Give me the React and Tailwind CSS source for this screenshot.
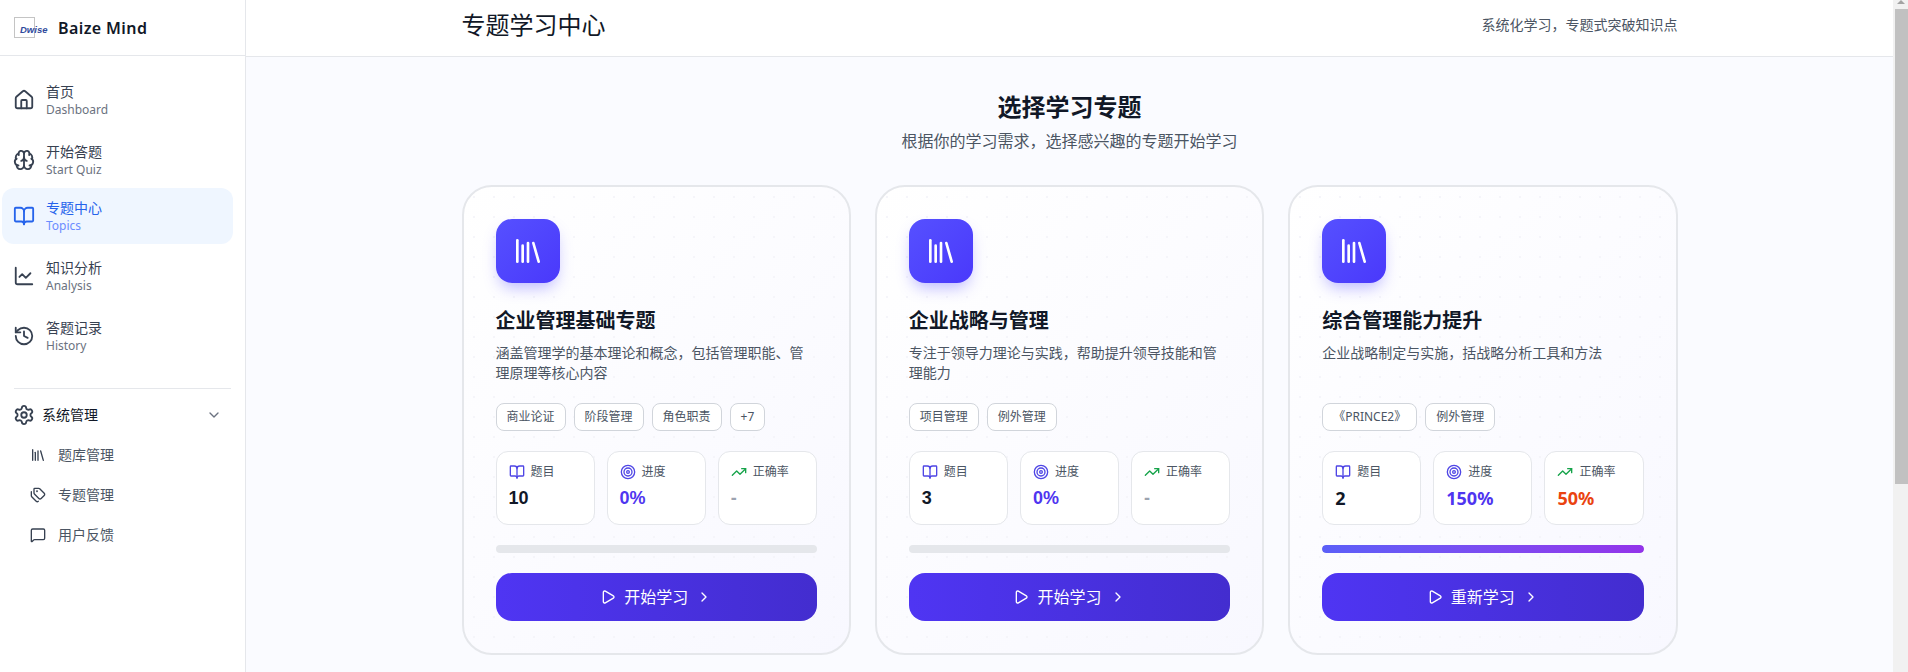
import React from 'react';
import { House, Brain, BookOpen, ChartLine, History, Settings, ChevronDown, Library, Tags, MessageSquare, Target, TrendingUp, Play, ChevronRight } from 'lucide-react';

const font = 'font-["Noto_Sans","Noto_Sans_CJK_SC",sans-serif]';

const nav = [
  { icon: House, title: '首页', sub: 'Dashboard', cls: 'mt-0' },
  { icon: Brain, title: '开始答题', sub: 'Start Quiz', cls: 'mt-1' },
  { icon: BookOpen, title: '专题中心', sub: 'Topics', cls: 'mt-0', active: true },
  { icon: ChartLine, title: '知识分析', sub: 'Analysis', cls: 'mt-1' },
  { icon: History, title: '答题记录', sub: 'History', cls: 'mt-1' },
];

const subNav = [
  { icon: Library, title: '题库管理' },
  { icon: Tags, title: '专题管理' },
  { icon: MessageSquare, title: '用户反馈' },
];

const arial = 'font-["Liberation_Sans",sans-serif]';

const cards = [
  {
    title: '企业管理基础专题',
    desc: '涵盖管理学的基本理论和概念，包括管理职能、管理原理等核心内容',
    tags: ['商业论证', '阶段管理', '角色职责', '+7'],
    count: '10', progress: '0%', rate: '-', fill: false, action: '开始学习', valueFont: arial,
  },
  {
    title: '企业战略与管理',
    desc: '专注于领导力理论与实践，帮助提升领导技能和管理能力',
    tags: ['项目管理', '例外管理'],
    count: '3', progress: '0%', rate: '-', fill: false, action: '开始学习', valueFont: arial,
  },
  {
    title: '综合管理能力提升',
    desc: '企业战略制定与实施，括战略分析工具和方法',
    tags: ['《PRINCE2》', '例外管理'],
    count: '2', progress: '150%', rate: '50%', fill: true, action: '重新学习', valueFont: '',
  },
];

function Stat({ icon: Icon, iconClass, label, value, valueClass }) {
  return (
    <div className="rounded-xl border border-[#e5e7eb] bg-white p-3">
      <div className="flex h-4 items-center gap-1.5 text-xs text-[#4b5563]">
        <Icon className={`h-4 w-4 ${iconClass}`} strokeWidth={2} />
        <span>{label}</span>
      </div>
      <div className={`mt-1 text-lg leading-7 font-bold ${valueClass}`}>{value}</div>
    </div>
  );
}

function Card({ c }) {
  return (
    <div className="rounded-[30px] border-2 border-[#e5e7eb] bg-[radial-gradient(#f5f5fa_1px,transparent_1px),linear-gradient(135deg,#ffffff,#f8f8ff)] bg-[size:20px_20px,100%_100%] p-8">
      <div className="flex h-16 w-16 items-center justify-center rounded-2xl bg-gradient-to-br from-[#5650ff] to-[#4a38fb] shadow-[0_8px_16px_-4px_rgba(79,70,255,0.4)]">
        <Library className="h-8 w-8 text-white" strokeWidth={2} />
      </div>
      <h3 className="mt-6 text-xl leading-7 font-bold text-[#111827]">{c.title}</h3>
      <p className="mt-2 h-10 text-sm leading-5 text-[#4b5563]">{c.desc}</p>
      <div className="mt-5 flex gap-2">
        {c.tags.map((t) => (
          <span key={t} className="flex h-7 items-center rounded-lg border border-[#d1d5db] bg-white px-2.5 text-xs text-[#4b5563]">{t}</span>
        ))}
      </div>
      <div className="mt-5 grid grid-cols-3 gap-3">
        <Stat icon={BookOpen} iconClass="text-[#4f46e5]" label="题目" value={c.count} valueClass={`text-[#111827] ${c.valueFont}`} />
        <Stat icon={Target} iconClass="text-[#4f46e5]" label="进度" value={c.progress} valueClass={`text-[#4f35f0] ${c.valueFont}`} />
        <Stat icon={TrendingUp} iconClass="text-[#16a34a]" label="正确率" value={c.rate} valueClass={`${c.rate === '-' ? 'text-[#9ca3af]' : 'text-[#ea4310]'} ${c.valueFont}`} />
      </div>
      <div className="mt-5 h-2 overflow-hidden rounded-full bg-[#e5e7eb]">
        {c.fill && <div className="h-full w-full rounded-full bg-gradient-to-r from-[#5b5ff8] to-[#9333ea]" />}
      </div>
      <button className="mt-5 flex h-12 w-full items-center justify-center rounded-2xl bg-gradient-to-r from-[#4f35f3] to-[#432dcf] text-base text-white">
        <Play className="mr-2 h-4 w-4" strokeWidth={2} />
        <span>{c.action}</span>
        <ChevronRight className="ml-2 h-4 w-4" strokeWidth={2} />
      </button>
    </div>
  );
}

export default function App() {
  return (
    <div className={`flex h-[672px] w-full overflow-hidden bg-[#fafbff] ${font}`}>
      <aside className="flex w-[246px] shrink-0 flex-col border-r border-[#e5e7eb] bg-white">
        <div className="flex h-[56px] shrink-0 items-center border-b border-[#e5e7eb] pl-[14px]">
          <div className="relative h-[21px] w-[21px] border border-[#c4c4c4]">
            <span className='absolute top-[6px] left-[5px] font-["Liberation_Sans",sans-serif] text-[9.5px] leading-[11px] font-bold text-[#2f4a9c] italic'>Dwise</span>
          </div>
          <span className="ml-[23px] text-base font-semibold tracking-[0.4px] text-[#111827]">Baize Mind</span>
        </div>
        <nav className="flex flex-col pt-[16px] pr-3 pl-0.5">
          {nav.map(({ icon: Icon, title, sub, cls, active }) => (
            <div key={title} className={`flex h-14 items-center rounded-xl pl-[11px] ${cls} ${active ? 'bg-[#eff6ff]' : ''}`}>
              <Icon className={`h-[22px] w-[22px] ${active ? 'text-[#2563eb]' : 'text-[#374151]'}`} strokeWidth={2} />
              <div className="ml-[11px]">
                <div className={`text-sm leading-5 ${active ? 'text-[#2563eb]' : 'text-[#374151]'}`}>{title}</div>
                <div className={`text-xs leading-4 ${active ? 'text-[#6b8cff]' : 'text-[#6b7280]'}`}>{sub}</div>
              </div>
            </div>
          ))}
        </nav>
        <div className="mx-[14px] mt-6 border-t border-[#e5e7eb]" />
        <div className="mt-4 flex h-5 items-center pr-[23px] pl-[13px]">
          <Settings className="h-[22px] w-[22px] text-[#374151]" strokeWidth={2} />
          <span className="ml-[7px] flex-1 text-sm text-[#111827]">系统管理</span>
          <ChevronDown className="h-4 w-4 text-[#6b7280]" strokeWidth={2} />
        </div>
        <div className="mt-[10px] flex flex-col">
          {subNav.map(({ icon: Icon, title }) => (
            <div key={title} className="flex h-10 items-center pl-[30px] text-sm text-[#4b5563]">
              <Icon className="h-4 w-4 text-[#374151]" strokeWidth={2} />
              <span className="ml-3">{title}</span>
            </div>
          ))}
        </div>
      </aside>
      <main className="min-w-0 flex-1">
        <header className="h-[57px] border-b border-[#e5e7eb] bg-white">
          <div className="mx-auto flex h-[56px] w-[1216px] items-center justify-between pb-1.5">
            <h1 className="text-2xl leading-8 text-[#111827]">专题学习中心</h1>
            <span className="text-sm text-[#4b5563]">系统化学习，专题式突破知识点</span>
          </div>
        </header>
        <div className="mx-auto w-[1216px] pt-[34px]">
          <h2 className="text-center text-2xl leading-8 font-bold text-[#111827]">选择学习专题</h2>
          <p className="mt-[6px] text-center text-base leading-6 text-[#4b5563]">根据你的学习需求，选择感兴趣的专题开始学习</p>
          <div className="mt-8 grid grid-cols-3 gap-6">
            {cards.map((c) => <Card key={c.title} c={c} />)}
          </div>
        </div>
      </main>
      <div className="flex w-[15px] shrink-0 flex-col bg-[#f1f1f1]">
        <div className="flex h-[9px] items-start justify-center">
          <div className="h-0 w-0 border-x-[4px] border-b-[4px] border-x-transparent border-b-[#a3a3a3]" />
        </div>
        <div className="ml-0.5 h-[475px] bg-[#c1c1c1]" />
      </div>
    </div>
  );
}
